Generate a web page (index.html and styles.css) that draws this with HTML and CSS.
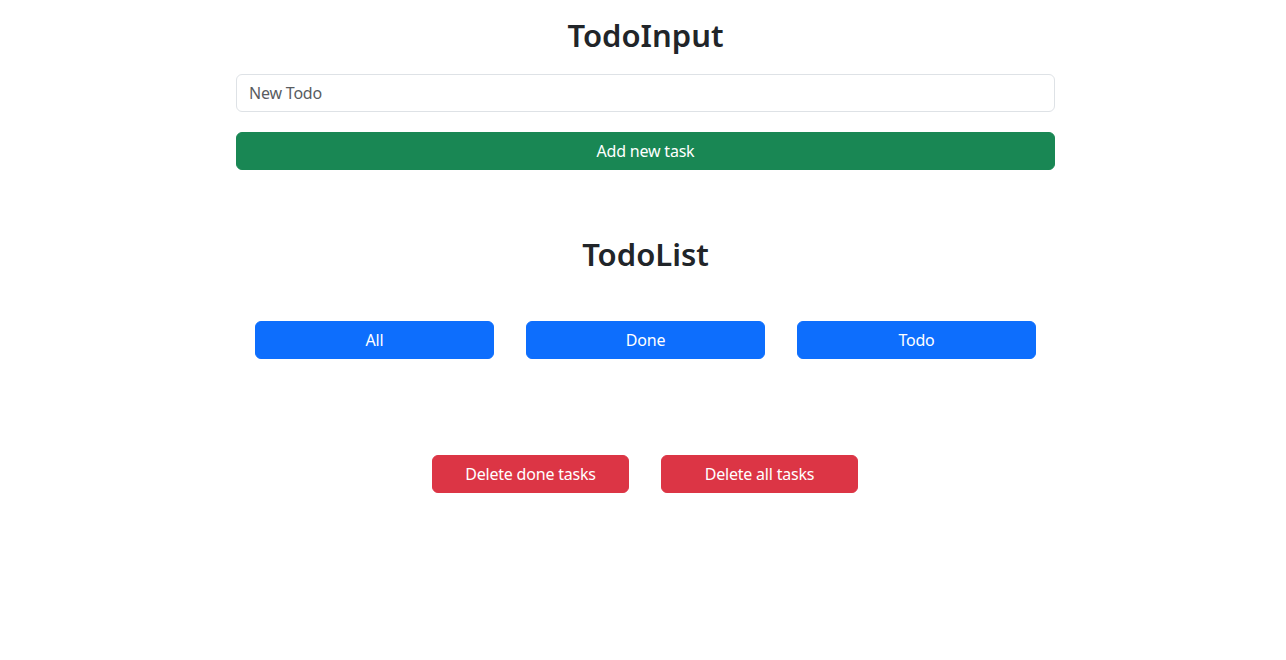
FILE: index.html
```html
<!DOCTYPE html>
<html lang="en">
<head>
<meta charset="utf-8">
<title>Todo</title>
<link rel="stylesheet" href="styles.css">
</head>
<body>
<main class="app">
  <section class="todo-input">
    <h2 class="title">TodoInput</h2>
    <input class="field" type="text" placeholder="New Todo">
    <button class="btn btn-success btn-block">Add new task</button>
  </section>
  <section class="todo-list">
    <h2 class="title">TodoList</h2>
    <div class="filters">
      <button class="btn btn-primary btn-filter">All</button>
      <button class="btn btn-primary btn-filter">Done</button>
      <button class="btn btn-primary btn-filter">Todo</button>
    </div>
    <div class="actions">
      <button class="btn btn-danger btn-delete">Delete done tasks</button>
      <button class="btn btn-danger btn-delete">Delete all tasks</button>
    </div>
  </section>
</main>
</body>
</html>
```
FILE: styles.css
```css
* { box-sizing: border-box; }
html, body { margin: 0; padding: 0; background: #fff; }
body {
  font-family: "Noto Sans", "Open Sans", sans-serif;
  font-size: 16px;
  line-height: 1.5;
  color: #212529;
  padding-left: 5px;
}
.app {
  width: 819px;
  margin: 0 auto;
  padding-top: 16px;
}
.title {
  margin: 0;
  font-size: 31px;
  font-weight: 600;
  line-height: 38px;
  text-align: center;
  color: #212529;
}
.todo-input { display: flex; flex-direction: column; }
.todo-input .title { margin-bottom: 20px; }
.field {
  display: block;
  width: 100%;
  height: 38px;
  padding: 6px 12px;
  font: inherit;
  letter-spacing: -0.2px;
  color: #212529;
  border: 1px solid #dee2e6;
  border-radius: 6px;
  outline: none;
  background: #fff;
}
.field::placeholder { color: #595c5f; opacity: 1; }
.btn {
  display: inline-flex;
  align-items: center;
  justify-content: center;
  height: 38px;
  padding: 6px 12px;
  font: inherit;
  letter-spacing: -0.2px;
  color: #fff;
  border: 1px solid transparent;
  border-radius: 6px;
  cursor: pointer;
}
.btn-success { background: #198754; border-color: #198754; }
.btn-primary { background: #0d6efd; border-color: #0d6efd; }
.btn-danger { background: #dc3545; border-color: #dc3545; }
.btn-block { width: 100%; margin-top: 20px; }
.todo-list { padding-top: 65px; }
.filters {
  display: flex;
  justify-content: center;
  gap: 32px;
  margin-top: 48px;
}
.btn-filter { width: 239px; }
.actions {
  display: flex;
  justify-content: center;
  gap: 32px;
  margin-top: 96px;
  padding-right: 1px;
}
.btn-delete { width: 197px; }
```
